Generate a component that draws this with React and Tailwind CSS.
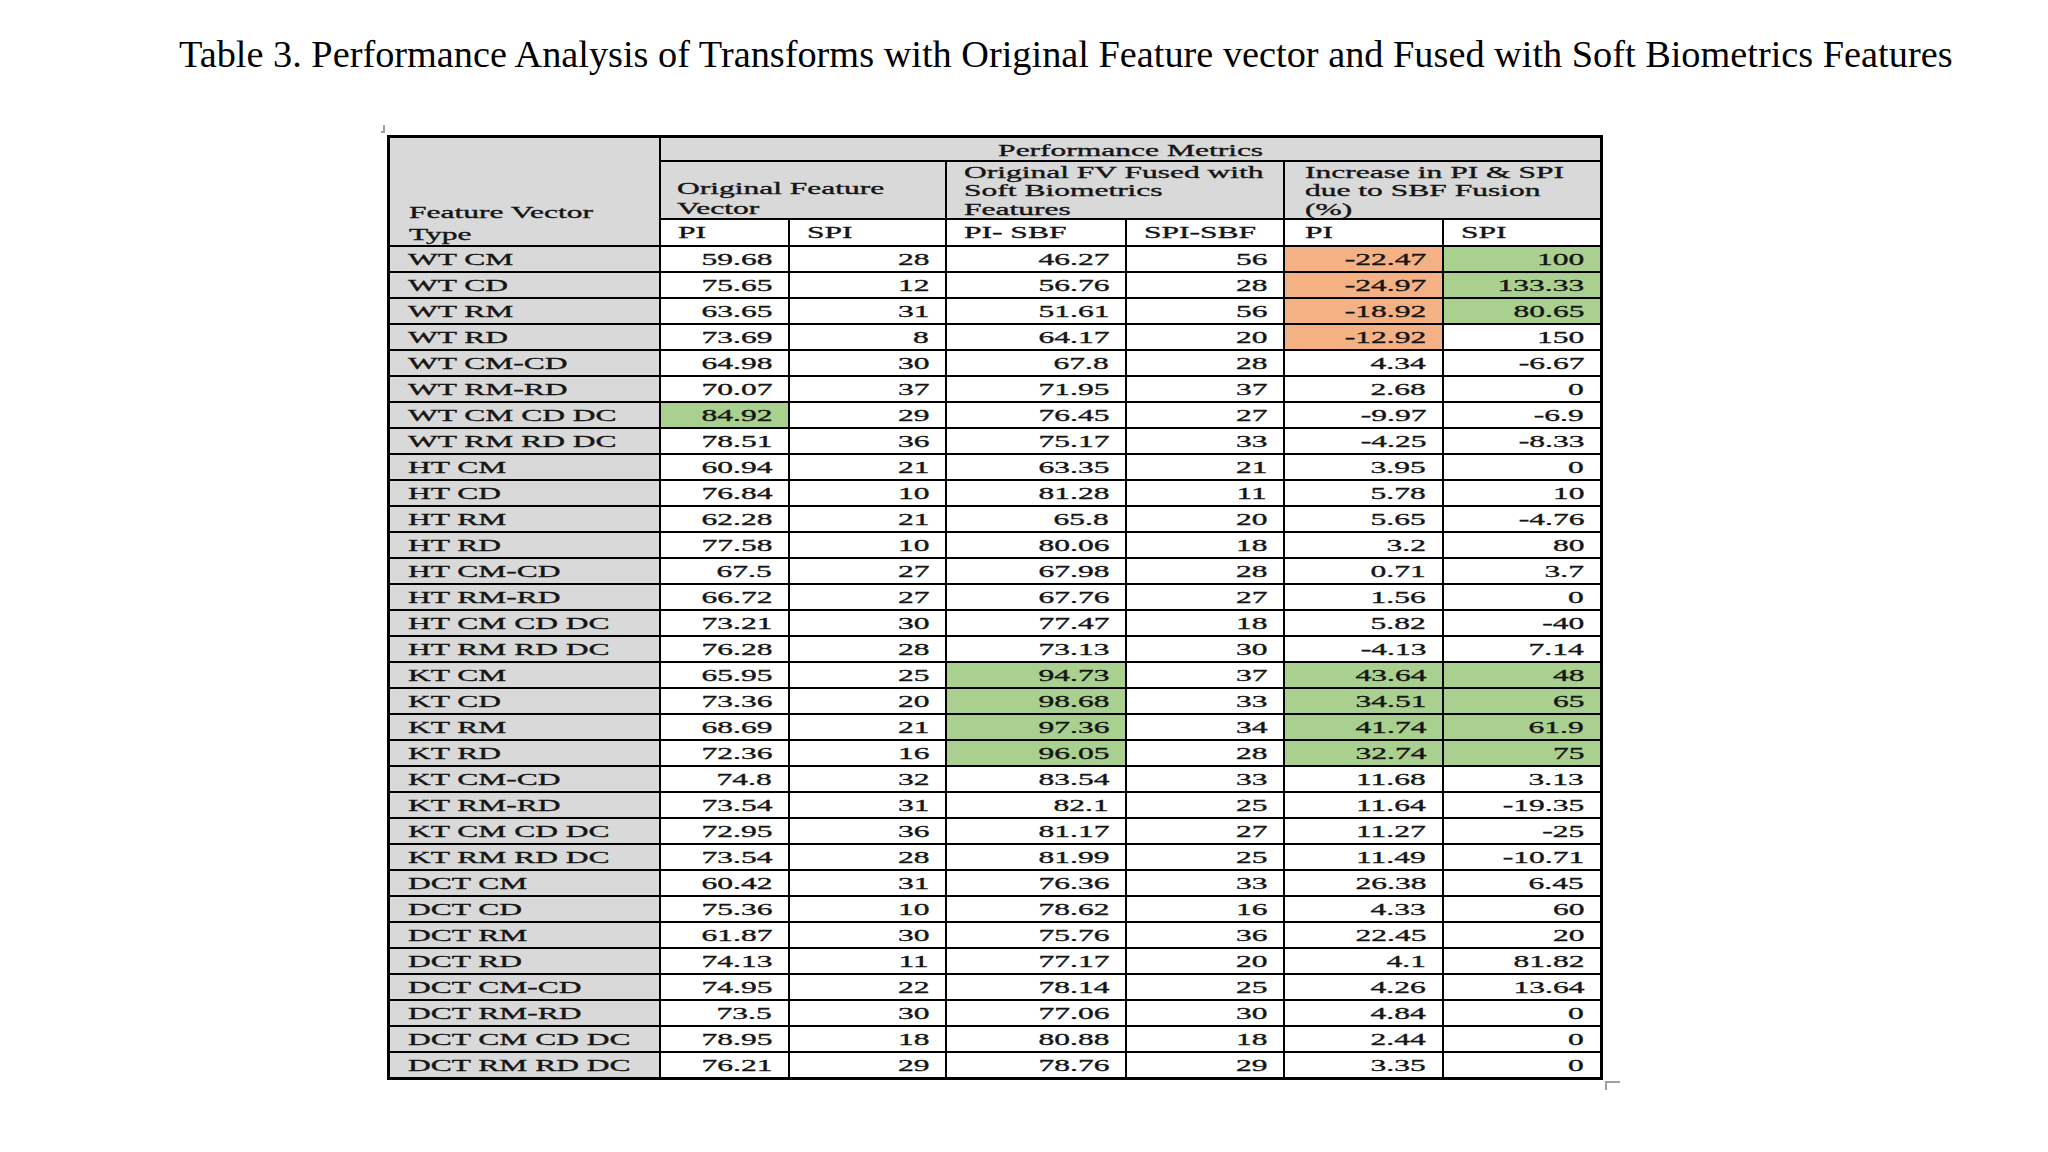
import React from "react";

// each row: label, six values, and a six-char fill code (o = orange, g = green, . = white)
const rows = [
  ["WT CM", "59.68", "28", "46.27", "56", "-22.47", "100", "....og"],
  ["WT CD", "75.65", "12", "56.76", "28", "-24.97", "133.33", "....og"],
  ["WT RM", "63.65", "31", "51.61", "56", "-18.92", "80.65", "....og"],
  ["WT RD", "73.69", "8", "64.17", "20", "-12.92", "150", "....o."],
  ["WT CM-CD", "64.98", "30", "67.8", "28", "4.34", "-6.67", "......"],
  ["WT RM-RD", "70.07", "37", "71.95", "37", "2.68", "0", "......"],
  ["WT CM CD DC", "84.92", "29", "76.45", "27", "-9.97", "-6.9", "g....."],
  ["WT RM RD DC", "78.51", "36", "75.17", "33", "-4.25", "-8.33", "......"],
  ["HT CM", "60.94", "21", "63.35", "21", "3.95", "0", "......"],
  ["HT CD", "76.84", "10", "81.28", "11", "5.78", "10", "......"],
  ["HT RM", "62.28", "21", "65.8", "20", "5.65", "-4.76", "......"],
  ["HT RD", "77.58", "10", "80.06", "18", "3.2", "80", "......"],
  ["HT CM-CD", "67.5", "27", "67.98", "28", "0.71", "3.7", "......"],
  ["HT RM-RD", "66.72", "27", "67.76", "27", "1.56", "0", "......"],
  ["HT CM CD DC", "73.21", "30", "77.47", "18", "5.82", "-40", "......"],
  ["HT RM RD DC", "76.28", "28", "73.13", "30", "-4.13", "7.14", "......"],
  ["KT CM", "65.95", "25", "94.73", "37", "43.64", "48", "..g.gg"],
  ["KT CD", "73.36", "20", "98.68", "33", "34.51", "65", "..g.gg"],
  ["KT RM", "68.69", "21", "97.36", "34", "41.74", "61.9", "..g.gg"],
  ["KT RD", "72.36", "16", "96.05", "28", "32.74", "75", "..g.gg"],
  ["KT CM-CD", "74.8", "32", "83.54", "33", "11.68", "3.13", "......"],
  ["KT RM-RD", "73.54", "31", "82.1", "25", "11.64", "-19.35", "......"],
  ["KT CM CD DC", "72.95", "36", "81.17", "27", "11.27", "-25", "......"],
  ["KT RM RD DC", "73.54", "28", "81.99", "25", "11.49", "-10.71", "......"],
  ["DCT CM", "60.42", "31", "76.36", "33", "26.38", "6.45", "......"],
  ["DCT CD", "75.36", "10", "78.62", "16", "4.33", "60", "......"],
  ["DCT RM", "61.87", "30", "75.76", "36", "22.45", "20", "......"],
  ["DCT RD", "74.13", "11", "77.17", "20", "4.1", "81.82", "......"],
  ["DCT CM-CD", "74.95", "22", "78.14", "25", "4.26", "13.64", "......"],
  ["DCT RM-RD", "73.5", "30", "77.06", "30", "4.84", "0", "......"],
  ["DCT CM CD DC", "78.95", "18", "80.88", "18", "2.44", "0", "......"],
  ["DCT RM RD DC", "76.21", "29", "78.76", "29", "3.35", "0", "......"],
];

function fillFor(r, c) {
  const m = r[7][c - 1];
  if (m === "o") return "bg-[#f4b183]";
  if (m === "g") return "bg-[#a9d08e]";
  return "bg-white";
}

const txt = "font-['Liberation_Serif','Times_New_Roman',serif] text-[17.5px] text-[#151515] [-webkit-text-stroke:0.35px_#151515] whitespace-nowrap";

function L({ children }) {
  return <span className="inline-block origin-left scale-x-[1.8]">{children}</span>;
}
function R({ children }) {
  return <span className="inline-block origin-right scale-x-[1.8]">{children}</span>;
}

export default function App() {
  return (
    <div className="w-[2048px] h-[1152px] bg-white overflow-hidden">
      <div className="pt-[35px] pl-[179px] font-['Liberation_Serif','Times_New_Roman',serif] text-[38.3px] leading-none text-black whitespace-nowrap">
        Table 3. Performance Analysis of Transforms with Original Feature vector and Fused with Soft Biometrics Features
      </div>
      <div className="relative ml-[387px] mt-[62px] w-[1216px]">
        <span className="absolute left-[-6px] top-[-10px] w-[4px] h-[8px] border-r-2 border-b-2 border-[#a0a0a0]" />
        <span className="absolute right-[-17px] bottom-[-10px] w-[15px] h-[9px] border-l-2 border-t-2 border-[#a0a0a0]" />
        <div className={`grid grid-cols-[269px_127px_155px_178px_156px_157px_156px] grid-rows-[22px_56px_25px_repeat(32,24px)] gap-[2px] bg-black p-[3px] ${txt}`}>
          <div className="row-span-3 bg-[#d9d9d9] flex flex-col justify-end pl-[19px] leading-[22px]">
            <L>Feature Vector</L>
            <L>Type</L>
          </div>
          <div className="col-span-6 bg-[#d9d9d9] flex items-center justify-center leading-none pt-[2px]">
            <span className="inline-block origin-center scale-x-[1.8]">Performance Metrics</span>
          </div>
          <div className="col-span-2 bg-[#d9d9d9] flex flex-col justify-end pl-[16px] leading-[20px]">
            <L>Original Feature</L>
            <L>Vector</L>
          </div>
          <div className="col-span-2 bg-[#d9d9d9] flex flex-col justify-end pl-[17px] leading-[18.5px]">
            <L>Original FV Fused with</L>
            <L>Soft Biometrics</L>
            <L>Features</L>
          </div>
          <div className="col-span-2 bg-[#d9d9d9] flex flex-col justify-end pl-[20px] leading-[18.5px]">
            <L>Increase in PI &amp; SPI</L>
            <L>due to SBF Fusion</L>
            <L>(%)</L>
          </div>
          {["PI", "SPI", "PI- SBF", "SPI-SBF", "PI", "SPI"].map((h, i) => (
            <div key={i} className={`bg-white flex items-center leading-none ${i === 4 ? "pl-[20px]" : "pl-[17px]"}`}>
              <L>{h}</L>
            </div>
          ))}
          {rows.map((r, ri) => (
            <React.Fragment key={ri}>
              <div className="bg-[#d9d9d9] flex items-center pl-[18px] leading-none">
                <L>{r[0]}</L>
              </div>
              {[1, 2, 3, 4, 5, 6].map((c) => (
                <div key={c} className={`${fillFor(r, c)} flex items-center justify-end pr-[16px] leading-none`}>
                  <R>{r[c]}</R>
                </div>
              ))}
            </React.Fragment>
          ))}
        </div>
      </div>
    </div>
  );
}
